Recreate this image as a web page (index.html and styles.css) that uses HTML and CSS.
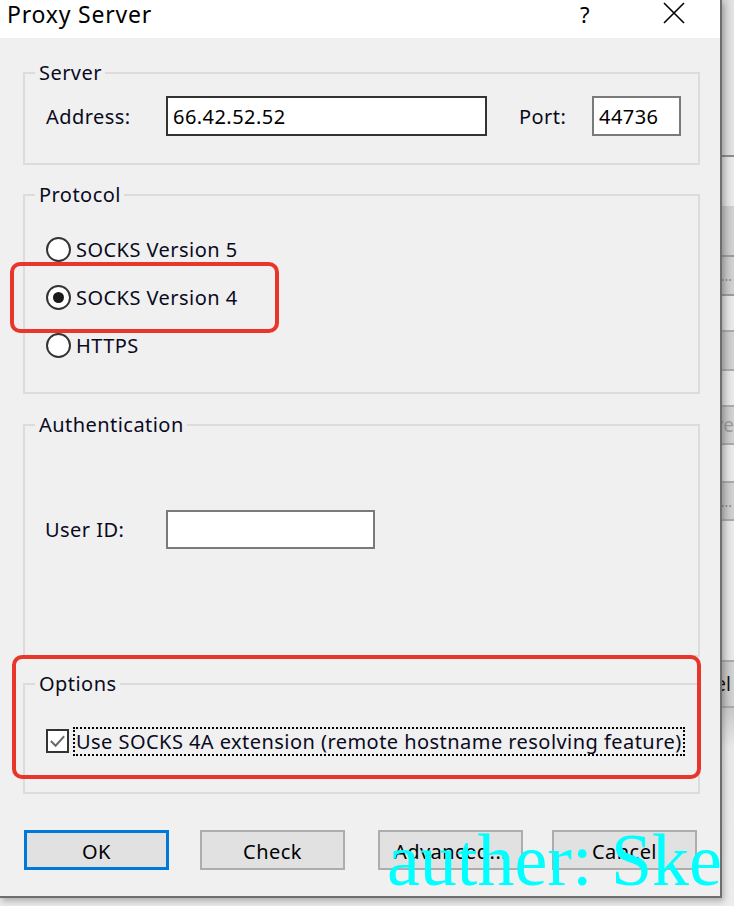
FILE: index.html
```html
<!DOCTYPE html>
<html>
<head>
<meta charset="utf-8">
<title>Proxy Server</title>
<link rel="stylesheet" href="styles.css">
</head>
<body>
<div class="desk">
  <div class="dialog">
    <div class="titlebar">
      <span class="title">Proxy Server</span>
      <span class="help">?</span>
      <span class="close">
        <svg width="24" height="22" viewBox="0 0 24 22"><path d="M2 1 L22 21 M22 1 L2 21" stroke="#000" stroke-width="1.6" fill="none"/></svg>
      </span>
    </div>
    <div class="content">
      <fieldset class="group server">
        <legend>Server</legend>
        <div class="addr-row">
          <span class="lbl lbl-addr">Address:</span>
          <span class="input input-addr">66.42.52.52</span>
          <span class="lbl lbl-port">Port:</span>
          <span class="input input-port">44736</span>
        </div>
      </fieldset>

      <fieldset class="group protocol">
        <legend>Protocol</legend>
        <div class="radio-row"><span class="radio"></span><span>SOCKS Version 5</span></div>
        <div class="radio-row"><span class="radio checked"></span><span>SOCKS Version 4</span></div>
        <div class="radio-row"><span class="radio"></span><span>HTTPS</span></div>
      </fieldset>

      <fieldset class="group auth">
        <legend>Authentication</legend>
        <div class="user-row">
          <span class="lbl lbl-user">User ID:</span>
          <span class="input input-user"></span>
        </div>
      </fieldset>

      <fieldset class="group options">
        <legend>Options</legend>
        <div class="check-row">
          <span class="checkbox">
            <svg width="20" height="20" viewBox="0 0 20 20"><path d="M3 10 L8 15 L17 5" stroke="#6a6a6a" stroke-width="2" fill="none"/></svg>
          </span>
          <span class="focus-text">Use SOCKS 4A extension (remote hostname resolving feature)</span>
        </div>
      </fieldset>

      <div class="buttons">
        <span class="btn btn-default">OK</span>
        <span class="btn">Check</span>
        <span class="btn btn-adv">Advanced...</span>
        <span class="btn">Cancel</span>
      </div>
    </div>
  </div>
  <div class="side">
    <div class="band b-top"></div>
    <div class="band b-light h49"></div>
    <div class="band b-dark h51 line-bottom"></div>
    <div class="band b-dark h39 line-bottom"><span class="clip">...</span></div>
    <div class="band b-light h34"></div>
    <div class="band b-dark h41 lines"></div>
    <div class="band b-light h34"></div>
    <div class="band b-dark h40 lines"><span class="clip grey">Save</span></div>
    <div class="band b-light h36"></div>
    <div class="band b-dark h40 lines"><span class="clip">...</span></div>
    <div class="band b-light h139"></div>
    <div class="band b-dark h48 lines"><span class="clip dark">Cancel</span></div>
    <div class="band b-bottom"></div>
  </div>
</div>

<div class="mark mark-socks4"></div>
<div class="mark mark-options"></div>
<div class="watermark">auther: Ske</div>
</body>
</html>
```

FILE: styles.css
```css
html, body {
  margin: 0;
  padding: 0;
}
body {
  width: 734px;
  height: 906px;
  overflow: hidden;
  position: relative;
  background: #e9e9e9;
  font-family: "Noto Sans", "Open Sans", sans-serif;
  font-size: 20px;
  letter-spacing: 0.45px;
  color: #0a0a1e;
}
.desk {
  display: flex;
  height: 906px;
}
.dialog {
  box-sizing: border-box;
  width: 722px;
  height: 898px;
  flex: none;
  background: #f0f0f0;
  border-right: 2px solid #6e6e6e;
  border-bottom: 2px solid #6e6e6e;
  box-shadow: 2px 3px 6px rgba(0,0,0,0.25);
  position: relative;
  z-index: 1;
}
.titlebar {
  height: 38px;
  background: #fff;
  display: flex;
  align-items: center;
}
.title {
  font-size: 23px;
  letter-spacing: 0.8px;
  padding-left: 7px;
  margin-top: -10px;
  color: #000;
}
.help {
  margin-left: auto;
  font-size: 22px;
  color: #000;
  margin-top: -10px;
  width: 20px;
}
.close {
  margin-left: 62px;
  margin-right: 34px;
  display: flex;
  margin-top: -12px;
}
.content {
  padding-top: 23px;
}
.group {
  box-sizing: border-box;
  width: 677px;
  margin: 0 0 0 23px;
  padding: 0;
  border: 2px solid #dcdcdc;
  min-width: 0;
}
.group legend {
  margin-left: 10px;
  padding: 0 3px 0 4px;
  font-size: 20px;
  line-height: 24px;
  color: #0a0a1e;
}
.server {
  padding-bottom: 27px;
}
.addr-row {
  display: flex;
  align-items: center;
  margin-top: 11px;
  padding-left: 21px;
}
.lbl-addr { width: 120px; }
.input {
  box-sizing: border-box;
  background: #fff;
  border: 2px solid #7a7a7a;
  height: 40px;
  display: flex;
  align-items: center;
  padding-left: 5px;
  color: #000;
}
.input-addr {
  width: 321px;
  border-color: #333;
}
.lbl-port {
  margin-left: 32px;
  width: 73px;
}
.input-port {
  width: 89px;
  padding-left: 5px;
}
.protocol {
  margin-top: 18px;
  padding-top: 18px;
  padding-bottom: 23px;
}
.radio-row {
  height: 48px;
  display: flex;
  align-items: center;
  padding-left: 21px;
}
.radio {
  box-sizing: border-box;
  width: 25px;
  height: 25px;
  border-radius: 50%;
  border: 2px solid #333;
  background: #fff;
  margin-right: 5px;
  display: flex;
  align-items: center;
  justify-content: center;
}
.radio.checked::after {
  content: "";
  width: 11px;
  height: 11px;
  border-radius: 50%;
  background: #1a1a1a;
}
.auth {
  margin-top: 19px;
  padding-top: 73px;
  padding-bottom: 106px;
}
.user-row {
  display: flex;
  align-items: center;
  padding-left: 20px;
}
.lbl-user { width: 121px; }
.input-user {
  width: 209px;
  height: 39px;
}
.options {
  margin-top: 15px;
  padding-top: 31px;
  padding-bottom: 37px;
}
.check-row {
  height: 28px;
  display: flex;
  align-items: center;
  padding-left: 21px;
}
.checkbox {
  box-sizing: border-box;
  width: 23px;
  height: 24px;
  border: 2px solid #333;
  background: #fff;
  display: flex;
  align-items: center;
  justify-content: center;
  margin-right: 5px;
}
.focus-text {
  outline: 2px dotted #000;
  outline-offset: -1px;
  padding: 0 2px;
  line-height: 27px;
  white-space: nowrap;
}
.buttons {
  margin-top: 36px;
  display: flex;
  gap: 31px;
  padding-left: 24px;
}
.btn {
  box-sizing: border-box;
  width: 145px;
  height: 40px;
  background: #e1e1e1;
  border: 2px solid #adadad;
  display: flex;
  align-items: center;
  justify-content: center;
  padding-top: 2px;
  color: #000;
}
.btn-adv { margin-left: 2px; margin-right: -2px; }
.btn-default {
  border: 3px solid #0078d7;
}

/* background window strip */
.side {
  flex: 1;
  display: flex;
  flex-direction: column;
  overflow: hidden;
  font-size: 19px;
  letter-spacing: 0;
}
.band {
  flex: none;
  display: flex;
  align-items: center;
  justify-content: flex-end;
  overflow: hidden;
  white-space: nowrap;
  box-sizing: border-box;
}
.b-top {
  height: 157px;
  background: linear-gradient(to right, #cfcfcf, #e4e4e4);
  border-bottom: 2px solid #8a8a8a;
}
.b-light { background: linear-gradient(to right, #d6d6d6, #ebebeb); }
.b-dark { background: linear-gradient(to right, #bdbdbd, #d2d2d2); }
.line-bottom { border-bottom: 2px solid #999; }
.lines { border-top: 2px solid #a8a8a8; border-bottom: 2px solid #a8a8a8; }
.h34 { height: 34px; }
.h36 { height: 36px; }
.h39 { height: 39px; }
.h40 { height: 40px; }
.h41 { height: 41px; }
.h48 { height: 48px; }
.h49 { height: 49px; }
.h51 { height: 51px; }
.h139 { height: 139px; }
.b-bottom {
  flex: 1;
  background: linear-gradient(to bottom, #c8c8c8, #e8e8e8 40px, #ececec);
}
.clip { color: #888; font-size: 14px; padding-right: 2px; }
.clip.grey { color: #9a9a9a; font-size: 19px; padding-right: 0; }
.clip.dark { color: #111; font-size: 19px; padding-right: 3px; }

/* annotations */
.mark {
  position: absolute;
  box-sizing: border-box;
  border: 4px solid #e8372a;
  border-radius: 10px;
  z-index: 5;
}
.mark-socks4 {
  left: 10px;
  top: 262px;
  width: 269px;
  height: 71px;
}
.mark-options {
  left: 12px;
  top: 655px;
  width: 689px;
  height: 124px;
}
.watermark {
  position: absolute;
  left: 387px;
  top: 823px;
  font-family: "Liberation Serif", serif;
  font-size: 74px;
  line-height: 74px;
  letter-spacing: 0;
  color: #00ffff;
  white-space: nowrap;
  z-index: 6;
}
```
